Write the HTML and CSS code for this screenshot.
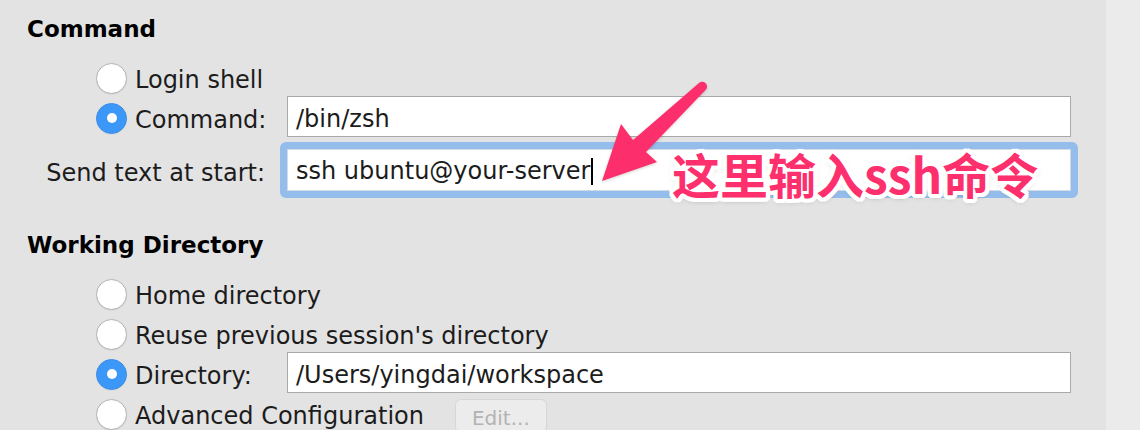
FILE: index.html
```html
<!DOCTYPE html>
<html lang="en">
<head>
<meta charset="utf-8">
<title>Profile - Command</title>
<link rel="stylesheet" href="styles.css">
</head>
<body>
<div class="window">
  <main class="panel">
    <section class="group">
      <h2 class="heading">Command</h2>
      <div class="opt">
        <span class="radio"></span>
        <span class="label">Login shell</span>
      </div>
      <div class="opt">
        <span class="radio on"></span>
        <span class="label fixed">Command:</span>
        <div class="field">/bin/zsh</div>
      </div>
      <div class="send-row">
        <span class="send-label">Send text at start:</span>
        <div class="ring">
          <div class="field focused">ssh ubuntu@your-server<span class="caret"></span></div>
        </div>
      </div>
    </section>
    <section class="group">
      <h2 class="heading">Working Directory</h2>
      <div class="opt">
        <span class="radio"></span>
        <span class="label">Home directory</span>
      </div>
      <div class="opt">
        <span class="radio"></span>
        <span class="label">Reuse previous session's directory</span>
      </div>
      <div class="opt">
        <span class="radio on"></span>
        <span class="label fixed">Directory:</span>
        <div class="field">/Users/yingdai/workspace</div>
      </div>
      <div class="opt">
        <span class="radio"></span>
        <span class="label">Advanced Configuration</span>
        <span class="btn">Edit...</span>
      </div>
    </section>
  </main>
  <aside class="strip"></aside>

  <svg class="arrow" viewBox="590 76 125 112" width="125" height="112" aria-hidden="true">
    <path d="M602 181 L621 124 L633 140 L699 83 A4.5 4.5 0 0 1 705.5 90 L646 152 L657 162 Z" fill="#fd2e6c"/>
  </svg>
  <div class="note">这里输入ssh命令</div>
</div>
</body>
</html>
```

FILE: styles.css
```css
* { box-sizing: border-box; }

html, body {
  margin: 0;
  padding: 0;
  background: #e3e3e3;
}

.window {
  position: relative;
  width: 1140px;
  height: 430px;
  overflow: hidden;
  display: flex;
  font-family: "DejaVu Sans", "Noto Sans CJK SC", sans-serif;
  color: #1c1c1c;
}

.panel {
  width: 1106px;
  flex: none;
  padding: 15px 0 0 27px;
  background: #e3e3e3;
}

.strip {
  flex: 1;
  background: #ebebeb;
}

.heading {
  margin: 0 0 15px 0;
  font-size: 23px;
  font-weight: bold;
  line-height: 28px;
  color: #000;
}

.opt {
  display: flex;
  align-items: center;
  height: 40px;
  padding-left: 69px;
}

.radio {
  flex: none;
  width: 31px;
  height: 31px;
  border-radius: 50%;
  background: #fff;
  border: 1px solid #b4b4b4;
  box-shadow: 0 0.5px 1px rgba(0, 0, 0, 0.08);
  margin-right: 8px;
  display: flex;
  align-items: center;
  justify-content: center;
}

.radio.on {
  background: #3b98f8;
  border-color: #3b8ee8;
}

.radio.on::after {
  content: "";
  width: 10px;
  height: 10px;
  border-radius: 50%;
  background: #fff;
}

.label {
  font-size: 24px;
  line-height: 36px;
  padding-top: 4px;
  white-space: nowrap;
}

.label.fixed {
  width: 152px;
  flex: none;
}

.field {
  width: 784px;
  height: 41px;
  flex: none;
  background: #fff;
  border: 1px solid #a9a9a9;
  padding: 5px 8px 0;
  font-size: 24px;
  line-height: 34px;
  white-space: nowrap;
  margin-top: -4px;
}

.send-row {
  display: flex;
  align-items: center;
  margin-top: 4px;
  margin-bottom: 33px;
}

.send-label {
  width: 238px;
  flex: none;
  text-align: right;
  font-size: 24px;
  line-height: 36px;
  padding-top: 6px;
  margin-right: 15px;
}

.ring {
  background: #95bdec;
  border-radius: 6px;
  padding: 7px;
}

.field.focused {
  height: 42px;
  margin-top: 0;
  border-color: #d4dbe4;
  padding-top: 4px;
}

.caret {
  display: inline-block;
  width: 1.5px;
  height: 27px;
  background: #000;
  vertical-align: -6px;
  margin-left: 1px;
}

.btn {
  margin-left: 31px;
  width: 92px;
  height: 34px;
  flex: none;
  border: 1px solid #d6d6d6;
  border-radius: 6px;
  background: #ececec;
  color: #b3b3b3;
  font-size: 20px;
  line-height: 28px;
  padding: 4px 0 0 16px;
  margin-top: 4px;
}

.arrow {
  position: absolute;
  left: 590px;
  top: 76px;
  filter: drop-shadow(0 1px 1.5px rgba(0, 0, 0, 0.18));
}

.note {
  position: absolute;
  left: 672px;
  top: 149px;
  font-family: "Noto Sans CJK SC", sans-serif;
  font-weight: bold;
  font-size: 48px;
  line-height: 48px;
  color: #fd2f6d;
  white-space: nowrap;
  text-shadow:
    4px 0 0 #fff, -4px 0 0 #fff, 0 4px 0 #fff, 0 -4px 0 #fff,
    3px 3px 0 #fff, -3px 3px 0 #fff, 3px -3px 0 #fff, -3px -3px 0 #fff,
    2px 4px 0 #fff, -2px 4px 0 #fff, 2px -4px 0 #fff, -2px -4px 0 #fff,
    4px 2px 0 #fff, -4px 2px 0 #fff, 4px -2px 0 #fff, -4px -2px 0 #fff,
    0 2px 6px rgba(0, 0, 0, 0.35);
}
```
